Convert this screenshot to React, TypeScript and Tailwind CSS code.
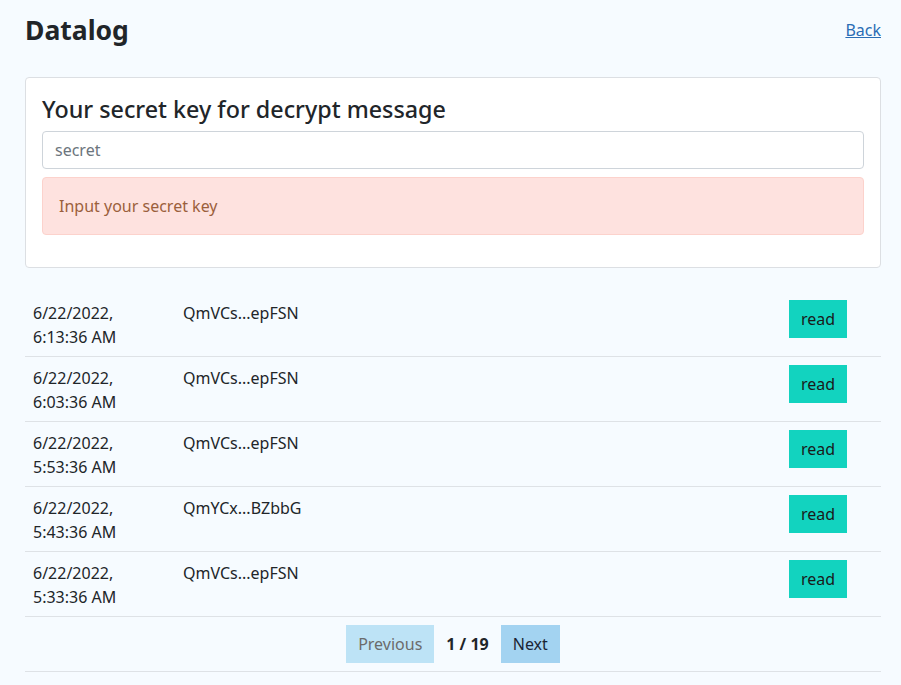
import React from "react";

const rows = [
  { date: "6/22/2022,", time: "6:13:36 AM", hash: "QmVCs...epFSN" },
  { date: "6/22/2022,", time: "6:03:36 AM", hash: "QmVCs...epFSN" },
  { date: "6/22/2022,", time: "5:53:36 AM", hash: "QmVCs...epFSN" },
  { date: "6/22/2022,", time: "5:43:36 AM", hash: "QmYCx...BZbbG" },
  { date: "6/22/2022,", time: "5:33:36 AM", hash: "QmVCs...epFSN" },
];

export default function App() {
  return (
    <div
      className="min-h-[685px] bg-[#f6fbff] text-[#212529] text-[16px] leading-[24px]"
      style={{ fontFamily: '"Noto Sans", "Open Sans", sans-serif' }}
    >
      <div className="pl-[25px] pr-[20px] pt-[12px]">
        {/* header */}
        <div className="flex items-center justify-between h-[36px]">
          <h2 className="text-[26.5px] leading-[36px] font-bold text-[#212529]">Datalog</h2>
          <a href="#" className="text-[#2a6db5] underline text-[16px]">Back</a>
        </div>

        {/* secret key card */}
        <div className="mt-[29px] bg-white border border-[#dcdfe3] rounded-[4px] p-[16px]">
          <h3 className="text-[23.3px] leading-[31px] font-medium mb-[6px]">Your secret key for decrypt message</h3>
          <input
            placeholder="secret"
            className="block w-full h-[38px] border border-[#ced4da] rounded-[4px] px-[12px] text-[16px] placeholder:text-[#6c757d] outline-none"
          />
          <div className="mt-[8px] mb-[16px] bg-[#fee2df] border border-[#fcd2cc] rounded-[4px] px-[16px] py-[16px] text-[#9b5f3c]">
            Input your secret key
          </div>
        </div>

        {/* log table */}
        <div className="mt-[24px]">
          {rows.map((r, i) => (
            <div key={i} className="flex border-b border-[#dee2e6] pt-[9px] pb-[7px]">
              <div className="w-[150px] px-[8px]">
                <div>{r.date}</div>
                <div>{r.time}</div>
              </div>
              <div className="flex-1 px-[8px]">{r.hash}</div>
              <div className="w-[100px] px-[8px] -mt-[1px]">
                <button className="h-[38px] px-[12px] bg-[#12d3bf] text-[#1a1a1a]">read</button>
              </div>
            </div>
          ))}
          <div className="flex items-center justify-center gap-[12px] border-b border-[#dee2e6] py-[8px]">
            <button className="h-[38px] px-[12px] bg-[#bde3f6] text-[#6b6b6b]">Previous</button>
            <span className="font-bold">1 / 19</span>
            <button className="h-[38px] px-[12px] bg-[#a3d3f1] text-[#1b2535]">Next</button>
          </div>
        </div>
      </div>
    </div>
  );
}
